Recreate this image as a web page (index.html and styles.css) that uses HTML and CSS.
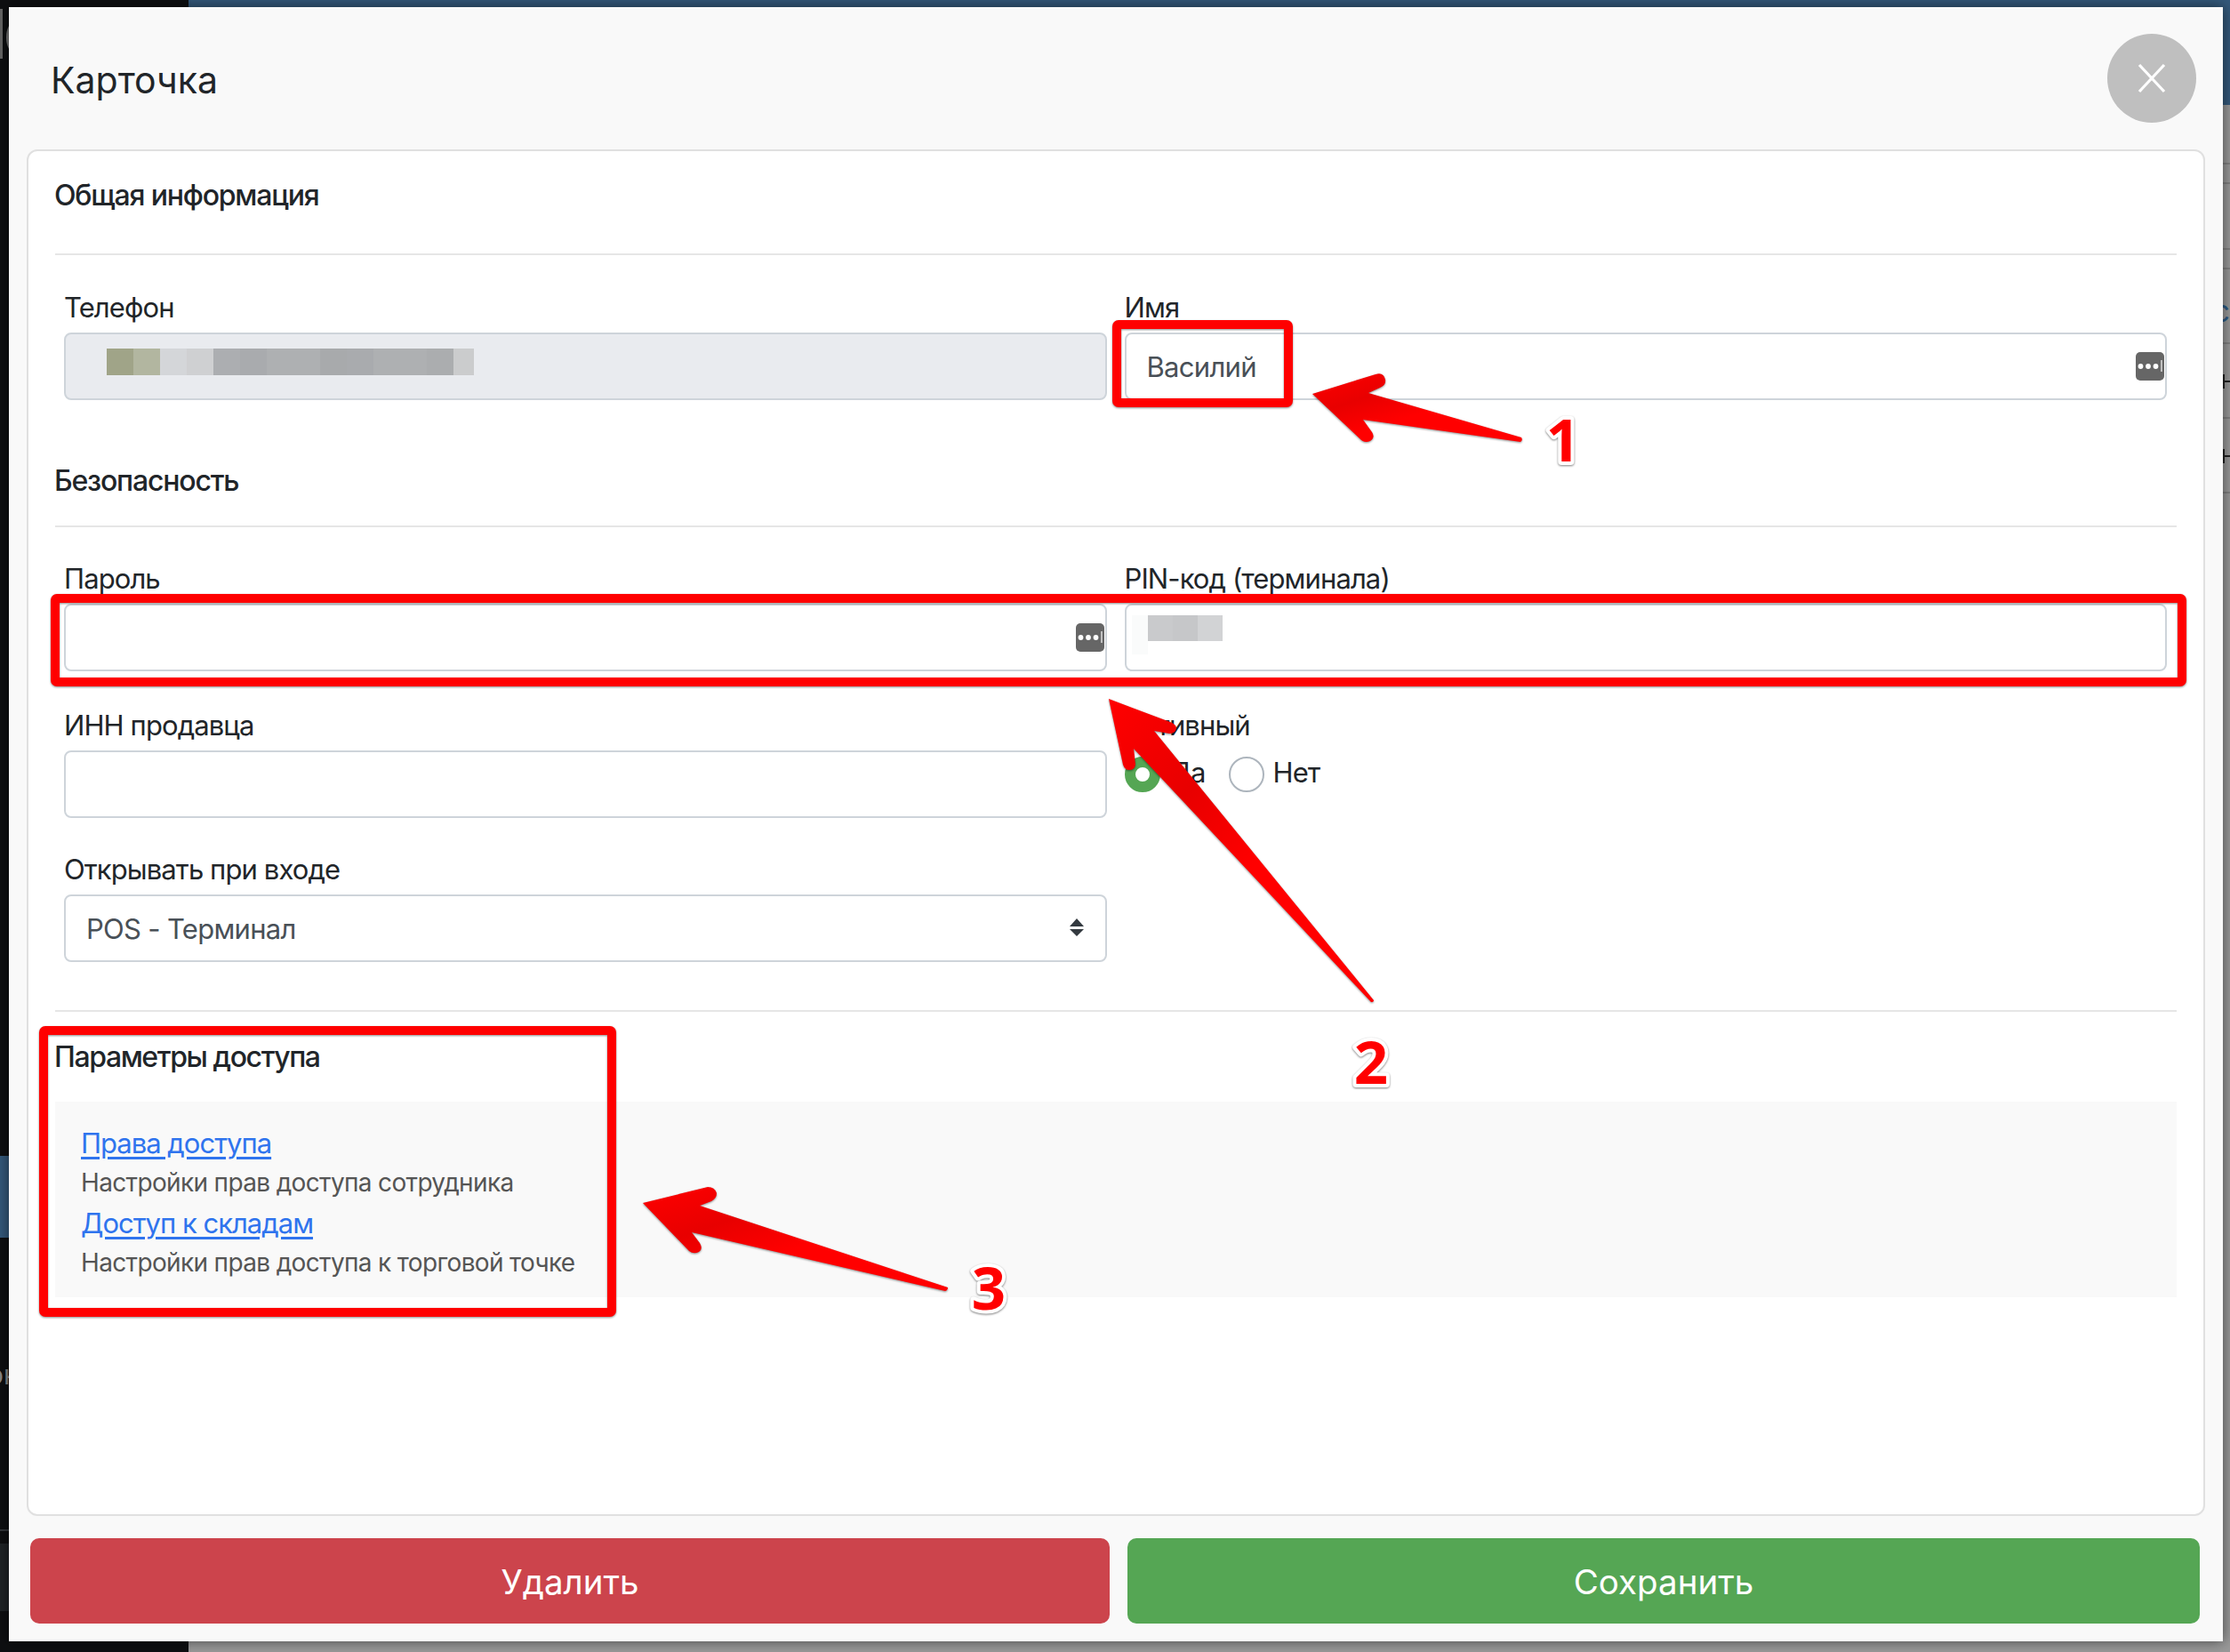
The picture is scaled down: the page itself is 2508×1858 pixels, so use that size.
FILE: index.html
```html
<!DOCTYPE html>
<html lang="ru">
<head>
<meta charset="utf-8">
<title>Карточка</title>
<link rel="stylesheet" href="styles.css">
</head>
<body>
<div class="app">
  <aside class="sidebar">
    <div class="side-logo"><span class="logo-bar"></span><span class="logo-curve"></span></div>
    <div class="side-active"></div>
    <div class="side-text">он</div>
    <div class="side-foot"></div>
  </aside>
  <main class="page">
    <header class="page-head"></header>
    <div class="page-rows">
      <div class="page-row"></div>
      <div class="page-row"></div>
      <div class="page-row"></div>
      <div class="page-row"></div>
      <div class="page-row page-row-blue"><span class="glyph-blue">c</span></div>
      <div class="page-row"><span class="glyph-h"></span></div>
      <div class="page-row"><span class="glyph-h"></span></div>
    </div>
  </main>
</div>

<section class="modal">
  <header class="modal-head">
    <h1 class="modal-title">Карточка</h1>
    <button class="close" type="button" aria-label="Закрыть">
      <svg width="32" height="34" viewBox="0 0 32 34"><path d="M2 2 L30 32 M30 2 L2 32" stroke="#fff" stroke-width="3.2" fill="none"/></svg>
    </button>
  </header>

  <div class="card">
    <h2 class="section section-first">Общая информация</h2>
    <div class="form-grid form-first">
      <div class="field">
        <label class="label">Телефон</label>
        <div class="control">
          <input class="input input-disabled" type="text" disabled>
          <div class="mosaic mosaic-phone">
            <i class="c1"></i><i class="c2"></i><i class="c3"></i><i class="c4"></i><i class="c5"></i><i class="c6"></i><i class="c7"></i><i class="c7"></i><i class="c8"></i><i class="c6"></i><i class="c7"></i><i class="c7"></i><i class="c9"></i><i class="c10"></i>
          </div>
        </div>
      </div>
      <div class="field">
        <label class="label">Имя</label>
        <div class="control">
          <input class="input" type="text" value="Василий">
          <svg class="key" width="32" height="32" viewBox="0 0 32 32"><rect width="32" height="32" rx="5" fill="#666"/><circle cx="5.5" cy="16" r="2.9" fill="#fff"/><circle cx="14" cy="16" r="2.9" fill="#fff"/><circle cx="22.5" cy="16" r="2.9" fill="#fff"/><rect x="28.2" y="9" width="1.5" height="13" fill="#ddd"/></svg>
        </div>
      </div>
    </div>

    <h2 class="section section-second">Безопасность</h2>
    <div class="form-grid form-second">
      <div class="field">
        <label class="label">Пароль</label>
        <div class="control">
          <input class="input" type="text">
          <svg class="key" width="32" height="32" viewBox="0 0 32 32"><rect width="32" height="32" rx="5" fill="#666"/><circle cx="5.5" cy="16" r="2.9" fill="#fff"/><circle cx="14" cy="16" r="2.9" fill="#fff"/><circle cx="22.5" cy="16" r="2.9" fill="#fff"/><rect x="28.2" y="9" width="1.5" height="13" fill="#ddd"/></svg>
        </div>
      </div>
      <div class="field">
        <label class="label">PIN-код (терминала)</label>
        <div class="control">
          <input class="input" type="text">
          <div class="mosaic-pin-faint"></div>
          <div class="mosaic mosaic-pin"><i class="p1"></i><i class="p2"></i><i class="p3"></i></div>
        </div>
      </div>
      <div class="field field-row2">
        <label class="label">ИНН продавца</label>
        <div class="control"><input class="input" type="text"></div>
      </div>
      <div class="field field-row2">
        <label class="label">Активный</label>
        <div class="radios">
          <span class="radio radio-on"></span><span class="radio-text">Да</span>
          <span class="radio"></span><span class="radio-text">Нет</span>
        </div>
      </div>
      <div class="field field-row3">
        <label class="label">Открывать при входе</label>
        <div class="control">
          <select class="input select"><option>POS - Терминал</option></select>
          <svg class="select-arrows" width="16" height="20" viewBox="0 0 16 20"><path d="M8 0 L16 9 H0 Z M0 12 H16 L8 20 Z" fill="#343a40"/></svg>
        </div>
      </div>
    </div>

    <div class="rule"></div>
    <h2 class="section section-third">Параметры доступа</h2>
    <div class="access">
      <a class="access-link" href="#">Права доступа</a>
      <p class="access-desc">Настройки прав доступа сотрудника</p>
      <a class="access-link" href="#">Доступ к складам</a>
      <p class="access-desc">Настройки прав доступа к торговой точке</p>
    </div>
  </div>

  <footer class="modal-foot">
    <button class="btn btn-delete" type="button">Удалить</button>
    <button class="btn btn-save" type="button">Сохранить</button>
  </footer>
</section>

<svg class="annotations" width="2508" height="1858" viewBox="0 0 2508 1858">
  <defs>
    <linearGradient id="arrowFill" x1="0" y1="0" x2="1" y2="1">
      <stop offset="0" stop-color="#ff0000"/>
      <stop offset="0.3" stop-color="#e80000"/>
      <stop offset="0.55" stop-color="#ff0000"/>
    </linearGradient>
  </defs>
  <rect class="mark" x="1256" y="365" width="193" height="88" rx="2"/>
  <rect class="mark" x="62" y="673" width="2392" height="94" rx="2"/>
  <rect class="mark" x="49" y="1159" width="639" height="317" rx="2"/>
  <path class="arrow" d="M1476 443 L1547 421 Q1556 418 1558 427 Q1559 433 1552 436 L1539 442 L1711 492 Q1713 495 1710 497 L1533 472 L1543 486 Q1547 492 1541 496 Q1534 499 1529 493 Z"/>
  <path class="arrow" d="M1247 786 L1316 812 Q1323 815 1323 819 Q1322 825 1315 825 L1298 822 L1545 1125 Q1545 1127 1542 1127 L1275 842 L1277 860 Q1276 866 1270 866 Q1265 866 1263 860 Z"/>
  <path class="arrow" d="M723 1353 L796 1335 Q804 1335 806 1342 Q806 1348 800 1351 L787 1356 L1066 1448 Q1066 1451 1063 1452 L778 1386 L787 1398 Q791 1405 786 1408 Q780 1411 775 1407 Z"/>
  <text class="digit" x="1758" y="519">1</text>
  <text class="digit" x="1542" y="1219">2</text>
  <text class="digit" x="1112" y="1473">3</text>
</svg>
</body>
</html>
```
FILE: styles.css
```css
* { box-sizing: border-box; }
html, body { margin: 0; padding: 0; }
body {
  width: 2508px;
  height: 1858px;
  overflow: hidden;
  position: relative;
  font-family: Inter, "Noto Sans", "Liberation Sans", sans-serif;
  color: #212529;
  background: #999;
}

/* page behind the modal */
.app { display: flex; width: 2508px; height: 1858px; }
.sidebar {
  width: 212px;
  flex: none;
  background: #0e0f11;
  display: flex;
  flex-direction: column;
}
.side-logo { height: 1300px; position: relative; }
.logo-bar { position: absolute; left: 0; top: 10px; width: 3px; height: 56px; background: #666; }
.logo-curve { position: absolute; left: 7px; top: 24px; width: 20px; height: 36px; border: 3px solid #777; border-radius: 50%; }
.side-active { height: 92px; background: #34597b; }
.side-text {
  margin-top: 136px;
  margin-left: -14px;
  height: 192px;
  font-size: 30px;
  line-height: 36px;
  color: #8a8a8a;
}
.side-foot {
  height: 92px;
  border-top: 2px solid #33363a;
  background: linear-gradient(#0e0f11 0 14px, #1f2326 14px);
}
.page { flex: 1; display: flex; flex-direction: column; }
.page-head { height: 118px; background: #34597b; }
.page-rows {
  display: grid;
  grid-template-rows: 67px 22px 74px 22px 84px 84px 84px;
}
.page-row {
  border-bottom: 2px solid #818181;
  display: flex;
  justify-content: flex-end;
  align-items: flex-end;
}
.glyph-blue { color: #2c5a85; font-size: 34px; line-height: 70px; }
.glyph-h {
  width: 8px;
  height: 16px;
  margin-bottom: 32px;
  background: linear-gradient(#222, #222) 0 50% / 8px 2px no-repeat;
  border-left: 2px solid #222;
}

/* modal */
.modal {
  position: absolute;
  left: 10px;
  top: 8px;
  width: 2490px;
  height: 1838px;
  background: #f9f9f9;
  box-shadow: 0 0 14px rgba(0, 0, 0, .55);
  display: flex;
  flex-direction: column;
}
.modal-head {
  height: 160px;
  flex: none;
  display: flex;
  align-items: center;
  justify-content: space-between;
  padding: 0 30px 0 47px;
}
.modal-title { margin: 3px 0 0; font-size: 41px; line-height: 48px; font-weight: 400; }
.close {
  width: 100px;
  height: 100px;
  border: 0;
  padding: 0;
  border-radius: 50%;
  background: #bfbfbf;
  display: flex;
  align-items: center;
  justify-content: center;
}

.card {
  margin-left: 20px;
  margin-right: 20px;
  height: 1537px;
  flex: none;
  background: #fff;
  border: 2px solid #e0e0e0;
  border-radius: 12px;
  padding: 0 30px;
}
.section {
  margin: 0;
  font-size: 32px;
  line-height: 40px;
  font-weight: 500;
  color: #212529;
  letter-spacing: -1.2px;
}
.section-first { padding: 30px 0 45px; border-bottom: 2px solid #e6e6e6; text-indent: -1px; }
.section-second { margin-top: 71px; padding-bottom: 30px; border-bottom: 2px solid #e6e6e6; text-indent: -1px; }
.section-third { margin-top: 31px; letter-spacing: -1.4px; text-indent: -1px; }

.form-grid {
  display: grid;
  grid-template-columns: 1fr 1fr;
  column-gap: 20px;
  padding: 0 11px 0 10px;
}
.form-first { margin-top: 33px; }
.form-second { margin-top: 32px; }
.field-row2 { margin-top: 35px; }
.field-row3 { margin-top: 32px; }
.label {
  display: block;
  height: 48px;
  padding-top: 3px;
  line-height: 45px;
  margin-bottom: 6px;
  font-size: 31px;
  color: #212529;
  letter-spacing: -0.9px;
}
.control { position: relative; height: 76px; }
.input {
  display: block;
  width: 100%;
  height: 76px;
  border: 2px solid #ced4da;
  border-radius: 8px;
  background: #fff;
  padding: 0 23px;
  font: 400 31px Inter, "Noto Sans", sans-serif;
  letter-spacing: -0.7px;
  color: #495057;
  outline: 0;
}
.input-disabled { background: #e9ebef; }
.select { appearance: none; -webkit-appearance: none; opacity: 1; }
.select-arrows { position: absolute; right: 26px; top: 27px; }
.key { position: absolute; right: 3px; top: 22px; }

.mosaic { position: absolute; display: flex; }
.mosaic i { display: block; width: 30px; height: 100%; }
.mosaic-phone { left: 48px; top: 18px; height: 30px; }
.mosaic-pin { left: 26px; top: 13px; height: 29px; }
.mosaic-pin-faint { position: absolute; left: 8px; top: 13px; width: 18px; height: 44px; background: #fafbfb; }
.mosaic-phone .c1 { background: #a0a488; }
.mosaic-phone .c2 { background: #b2b6a0; }
.mosaic-phone .c3 { background: #d4d6d9; }
.mosaic-phone .c4 { background: #cfd0d2; }
.mosaic-phone .c5 { background: #acaeb1; }
.mosaic-phone .c6 { background: #a9abae; }
.mosaic-phone .c7 { background: #aeb0b2; }
.mosaic-phone .c8 { background: #a8aaac; }
.mosaic-phone .c9 { background: #abadaf; }
.mosaic-phone .c10 { background: #cbcccd; width: 23px; }
.mosaic-pin i { width: 28px; }
.mosaic-pin .p1 { background: #c9cacc; }
.mosaic-pin .p2 { background: #c6c7c9; }
.mosaic-pin .p3 { background: #d2d3d5; }

.radios { display: flex; align-items: center; height: 40px; margin-top: 13px; }
.radio {
  width: 40px;
  height: 40px;
  border-radius: 50%;
  border: 2px solid #adb5bd;
  background: #fff;
  flex: none;
}
.radio-on { border: 12px solid #55a654; }
.radio-text { font-size: 31px; line-height: 40px; letter-spacing: -0.9px; margin: -4px 26px 0 10px; }

.rule { margin-top: 54px; border-top: 2px solid #e6e6e6; }

.access {
  margin-top: 30px;
  height: 220px;
  background: #f9f9f9;
  padding: 24px 29px 0;
}
.access-link {
  display: block;
  height: 45px;
  line-height: 45px;
  font-size: 31px;
  letter-spacing: -1px;
  color: #2f74ee;
  text-decoration: underline;
  text-underline-offset: 4px;
}
.access-desc {
  margin: 0;
  height: 45px;
  line-height: 45px;
  font-size: 28px;
  letter-spacing: -0.65px;
  color: #555;
}

.modal-foot {
  margin-top: 25px;
  display: flex;
  gap: 20px;
  padding: 0 26px 0 24px;
}
.btn {
  height: 96px;
  border: 0;
  border-radius: 10px;
  padding: 2px 0 0;
  color: #fff;
  font: 400 38.5px Inter, "Noto Sans", sans-serif;
}
.btn-delete { width: 1214px; background: #cc444c; }
.btn-save { width: 1206px; background: #55a654; }

/* hand-drawn annotations on top of the screenshot */
.annotations { position: absolute; left: 0; top: 0; pointer-events: none; }
.mark {
  fill: none;
  stroke: #ff0000;
  stroke-width: 10;
  filter: drop-shadow(0 1px 1px rgba(0, 0, 0, .45));
}
.arrow {
  fill: url(#arrowFill);
  filter: drop-shadow(0 1px 1px rgba(0, 0, 0, .45));
}
.digit {
  font-family: "Open Sans", "Noto Sans", sans-serif;
  font-weight: 700;
  font-size: 67px;
  text-anchor: middle;
  fill: #ff0000;
  stroke: #fff;
  stroke-width: 8px;
  stroke-linejoin: round;
  paint-order: stroke;
  filter: drop-shadow(0 1px 1px rgba(0, 0, 0, .5));
}
```
